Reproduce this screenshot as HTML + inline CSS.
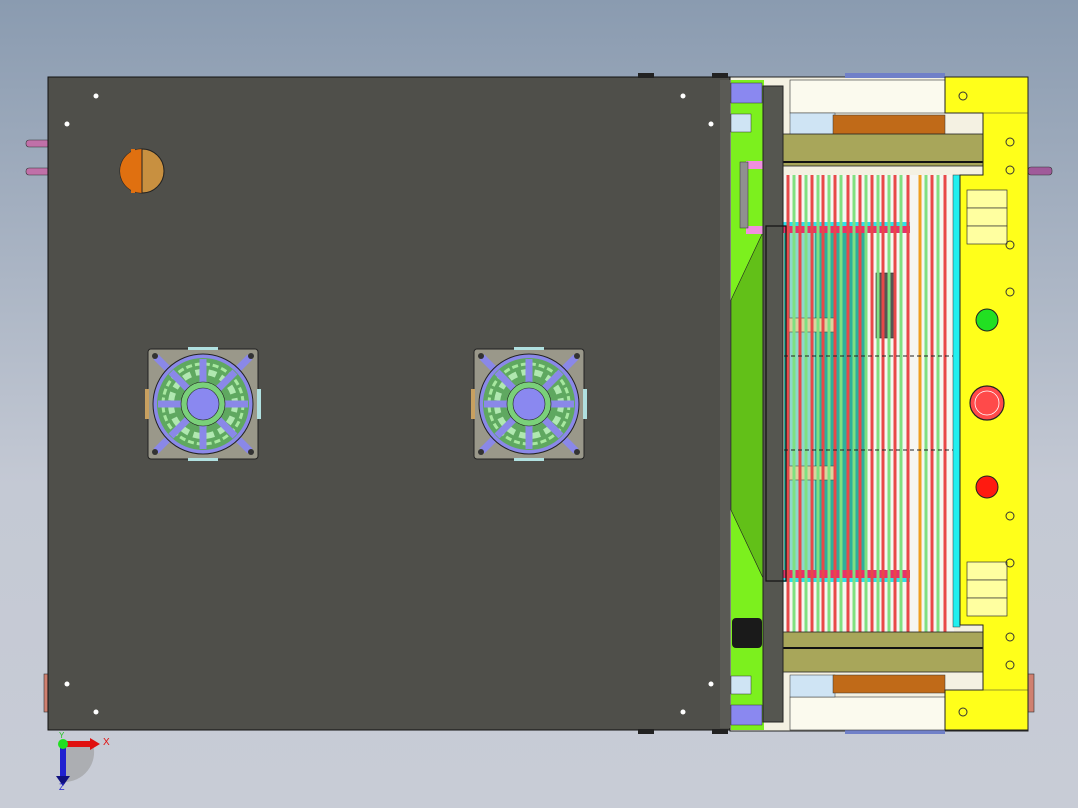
<!DOCTYPE html>
<html><head><meta charset="utf-8"><style>
html,body{margin:0;padding:0;width:1078px;height:808px;overflow:hidden;background:linear-gradient(#8a9bb0,#c4c9d4 60%,#c8ccd6);font-family:"Liberation Sans",sans-serif}
svg{position:absolute;left:0;top:0}
</style></head><body>
<svg width="1078" height="808" viewBox="0 0 1078 808">
<rect x="26" y="140" width="24" height="7" rx="3" fill="#c070a8" stroke="#333" stroke-width="0.6"/>
<rect x="26" y="168" width="24" height="7" rx="3" fill="#c070a8" stroke="#333" stroke-width="0.6"/>
<rect x="44" y="674" width="6" height="38" fill="#d08070" stroke="#333" stroke-width="0.6"/>
<rect x="1028" y="674" width="6" height="38" fill="#d08070" stroke="#333" stroke-width="0.6"/>
<rect x="1028" y="167" width="24" height="8" rx="3" fill="#a05a9a" stroke="#333" stroke-width="0.6"/>
<rect x="730" y="77" width="298" height="654" fill="#f4f1e2" stroke="#222" stroke-width="1"/>
<rect x="845" y="73" width="100" height="5" fill="#7080c8"/>
<rect x="845" y="730" width="100" height="4" fill="#7080c8"/>
<rect x="790" y="80" width="155" height="33" fill="#fbfaee" stroke="#333" stroke-width="0.6"/>
<rect x="790" y="697" width="155" height="33" fill="#fbfaee" stroke="#333" stroke-width="0.6"/>
<rect x="790" y="113" width="45" height="22" fill="#cfe4f4" stroke="#333" stroke-width="0.5"/>
<rect x="790" y="675" width="45" height="22" fill="#cfe4f4" stroke="#333" stroke-width="0.5"/>
<rect x="833" y="115" width="112" height="20" fill="#c06a18" stroke="#333" stroke-width="0.5"/>
<rect x="833" y="675" width="112" height="18" fill="#c06a18" stroke="#333" stroke-width="0.5"/>
<rect x="731" y="80" width="33" height="650" fill="#7cf01e"/>
<polygon points="731,300 764,230 764,580 731,510" fill="#62c018" stroke="#222" stroke-width="0.6"/>
<rect x="731" y="83" width="31" height="20" fill="#8a88f0" stroke="#333" stroke-width="0.5"/>
<rect x="731" y="705" width="31" height="20" fill="#8a88f0" stroke="#333" stroke-width="0.5"/>
<rect x="731" y="114" width="20" height="18" fill="#cfe4f4" stroke="#333" stroke-width="0.5"/>
<rect x="731" y="676" width="20" height="18" fill="#cfe4f4" stroke="#333" stroke-width="0.5"/>
<rect x="746" y="161" width="18" height="8" fill="#f090e0"/>
<rect x="746" y="226" width="18" height="8" fill="#f090e0"/>
<rect x="740" y="162" width="8" height="66" fill="#909090" stroke="#333" stroke-width="0.5"/>
<rect x="732" y="618" width="30" height="30" rx="4" fill="#1a1a1a"/>
<rect x="784" y="175" width="170" height="458" fill="#f6f6f2"/>
<rect x="784" y="225" width="82" height="355" fill="#2fae9c"/>
<rect x="790" y="232" width="25" height="340" fill="#8ed8cc"/>
<rect x="780" y="225" width="130" height="8" fill="#e8306a"/>
<rect x="780" y="570" width="130" height="8" fill="#e8306a"/>
<rect x="780" y="222" width="130" height="4" fill="#30e0e8"/>
<rect x="780" y="578" width="130" height="4" fill="#30e0e8"/>
<rect x="876" y="273" width="20" height="65" fill="#555" stroke="#222" stroke-width="0.6"/>
<rect x="786" y="318" width="48" height="14" fill="#d8d4a0" stroke="#333" stroke-width="0.5"/>
<rect x="786" y="466" width="48" height="14" fill="#d8d4a0" stroke="#333" stroke-width="0.5"/>
<g stroke-width="3">
<g stroke="#e84848">
<line x1="788" y1="175" x2="788" y2="633"/><line x1="800" y1="175" x2="800" y2="633"/><line x1="812" y1="175" x2="812" y2="633"/><line x1="823" y1="175" x2="823" y2="633"/><line x1="835" y1="175" x2="835" y2="633"/><line x1="848" y1="175" x2="848" y2="633"/><line x1="860" y1="175" x2="860" y2="633"/><line x1="872" y1="175" x2="872" y2="633"/><line x1="883" y1="175" x2="883" y2="633"/><line x1="895" y1="175" x2="895" y2="633"/><line x1="908" y1="175" x2="908" y2="633"/><line x1="932" y1="175" x2="932" y2="633"/><line x1="945" y1="175" x2="945" y2="633"/>
</g>
<g stroke="#80e080">
<line x1="794" y1="175" x2="794" y2="633"/><line x1="806" y1="175" x2="806" y2="633"/><line x1="818" y1="175" x2="818" y2="633"/><line x1="829" y1="175" x2="829" y2="633"/><line x1="841" y1="175" x2="841" y2="633"/><line x1="854" y1="175" x2="854" y2="633"/><line x1="866" y1="175" x2="866" y2="633"/><line x1="878" y1="175" x2="878" y2="633"/><line x1="889" y1="175" x2="889" y2="633"/><line x1="901" y1="175" x2="901" y2="633"/><line x1="926" y1="175" x2="926" y2="633"/><line x1="938" y1="175" x2="938" y2="633"/>
</g>
<line x1="920" y1="175" x2="920" y2="633" stroke="#f0a020"/>
</g>
<line x1="784" y1="356" x2="953" y2="356" stroke="#222" stroke-dasharray="4,3"/>
<line x1="784" y1="450" x2="953" y2="450" stroke="#222" stroke-dasharray="4,3"/>
<rect x="953" y="175" width="7" height="452" fill="#20f0f0" stroke="#333" stroke-width="0.5"/>
<rect x="783" y="134" width="200" height="32" fill="#a8a65a" stroke="#222" stroke-width="0.8"/>
<line x1="783" y1="162" x2="983" y2="162" stroke="#111" stroke-width="2"/>
<rect x="783" y="632" width="200" height="40" fill="#a8a65a" stroke="#222" stroke-width="0.8"/>
<line x1="783" y1="648" x2="983" y2="648" stroke="#111" stroke-width="2"/>
<rect x="763" y="86" width="20" height="636" fill="#555650" stroke="#222" stroke-width="1"/>
<rect x="766" y="226" width="20" height="355" fill="none" stroke="#111" stroke-width="1.2"/>
<path d="M945,77 H1028 V730 H945 V690 H983 V625 H960 V175 H983 V113 H945 Z" fill="#ffff1a" stroke="#222" stroke-width="1"/>
<line x1="945" y1="113" x2="1028" y2="113" stroke="#333" stroke-width="0.6"/>
<line x1="945" y1="690" x2="1028" y2="690" stroke="#333" stroke-width="0.6"/>
<g fill="#ffffa0" stroke="#333" stroke-width="0.7">
<rect x="967" y="190" width="40" height="18"/><rect x="967" y="208" width="40" height="18"/><rect x="967" y="226" width="40" height="18"/>
<rect x="967" y="562" width="40" height="18"/><rect x="967" y="580" width="40" height="18"/><rect x="967" y="598" width="40" height="18"/>
</g>
<g fill="none" stroke="#333" stroke-width="1">
<circle cx="963" cy="96" r="4"/><circle cx="963" cy="712" r="4"/>
<circle cx="1010" cy="142" r="4"/><circle cx="1010" cy="170" r="4"/><circle cx="1010" cy="245" r="4"/>
<circle cx="1010" cy="292" r="4"/><circle cx="1010" cy="516" r="4"/><circle cx="1010" cy="563" r="4"/>
<circle cx="1010" cy="637" r="4"/><circle cx="1010" cy="665" r="4"/>
</g>
<circle cx="987" cy="320" r="11" fill="#22e022" stroke="#222"/>
<circle cx="987" cy="403" r="17" fill="#ff4a4a" stroke="#222" stroke-width="1.2"/>
<circle cx="987" cy="403" r="12" fill="none" stroke="#fff" stroke-width="0.8"/>
<circle cx="987" cy="487" r="11" fill="#ff1a10" stroke="#222"/>
<rect x="48" y="77" width="682" height="653" fill="#4f4f4a" stroke="#111" stroke-width="1"/>
<rect x="720" y="80" width="10" height="648" fill="#5a5a55"/>
<rect x="638" y="73" width="16" height="5" fill="#222"/><rect x="712" y="73" width="16" height="5" fill="#222"/>
<rect x="638" y="729" width="16" height="5" fill="#222"/><rect x="712" y="729" width="16" height="5" fill="#222"/>
<g fill="#fff">
<circle cx="96" cy="96" r="2.5"/><circle cx="683" cy="96" r="2.5"/><circle cx="67" cy="124" r="2.5"/><circle cx="711" cy="124" r="2.5"/>
<circle cx="67" cy="684" r="2.5"/><circle cx="711" cy="684" r="2.5"/><circle cx="96" cy="712" r="2.5"/><circle cx="683" cy="712" r="2.5"/>
</g>
<circle cx="142" cy="171" r="22" fill="#c89040" stroke="#222"/>
<path d="M142,149 A22,22 0 0 0 142,193 Z" fill="#e07010"/>
<rect x="131" y="149" width="4" height="44" fill="#e07010"/>
<line x1="142" y1="149" x2="142" y2="193" stroke="#222"/>
<defs>
<g id="fan">
<rect x="0" y="0" width="110" height="110" rx="3" fill="#9a988a" stroke="#222"/>
<rect x="-3" y="40" width="4" height="30" fill="#c8a060"/>
<rect x="109" y="40" width="4" height="30" fill="#b0e0e0"/>
<rect x="40" y="-2" width="30" height="3" fill="#b0e0e0"/>
<rect x="40" y="109" width="30" height="3" fill="#b0e0e0"/>
<line x1="8" y1="8" x2="102" y2="102" stroke="#8a88e8" stroke-width="7"/>
<line x1="102" y1="8" x2="8" y2="102" stroke="#8a88e8" stroke-width="7"/>
<circle cx="55" cy="55" r="50" fill="#8a88e8" stroke="#222"/>
<circle cx="55" cy="55" r="46" fill="#5fa860"/>
<circle cx="55" cy="55" r="40" fill="none" stroke="#a8e8a0" stroke-width="3" stroke-dasharray="6,3"/>
<circle cx="55" cy="55" r="32" fill="none" stroke="#b0e8b0" stroke-width="6" stroke-dasharray="8,5"/>
<g stroke="#8a88e8" stroke-width="7">
<line x1="55" y1="10" x2="55" y2="100"/><line x1="10" y1="55" x2="100" y2="55"/>
<line x1="23" y1="23" x2="87" y2="87"/><line x1="87" y1="23" x2="23" y2="87"/>
</g>
<circle cx="55" cy="55" r="22" fill="#7ad07a" stroke="#222" stroke-width="0.6"/>
<circle cx="55" cy="55" r="16" fill="#8a88f0" stroke="#222" stroke-width="0.6"/>
<g fill="#333"><circle cx="7" cy="7" r="3"/><circle cx="103" cy="7" r="3"/><circle cx="7" cy="103" r="3"/><circle cx="103" cy="103" r="3"/></g>
</g>
</defs>
<use href="#fan" x="148" y="349"/>
<use href="#fan" x="474" y="349"/>
<path d="M63,744 L63,782 A30,30 0 0 0 93,744 Z" fill="#999" opacity="0.6"/>
<rect x="60" y="744" width="6" height="34" fill="#2020d0"/>
<polygon points="56,776 70,776 63,786" fill="#101080"/>
<rect x="63" y="741" width="28" height="6" fill="#e01010"/>
<polygon points="90,738 100,744 90,750" fill="#e01010"/>
<circle cx="63" cy="744" r="5" fill="#20e020"/>
<text x="103" y="745" font-size="10" fill="#e01010">X</text>
<text x="59" y="790" font-size="9" fill="#2020d0">Z</text>
<text x="59" y="738" font-size="8" fill="#20c020">Y</text>
</svg>
</body></html>
